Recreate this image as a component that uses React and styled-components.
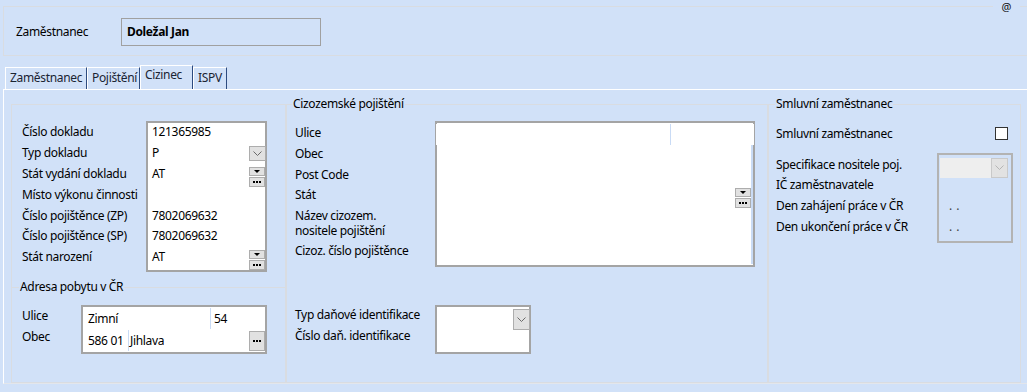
import React from 'react';
import styled, { createGlobalStyle } from 'styled-components';

const C = {
  bg: '#d1e1f8',
  group: '#d9dce1',
  box: '#a4a4a4',
  sep: '#c9dbf5',
  btn: '#e1e1e1',
  btnBorder: '#adadad',
  tabEdge: '#2d4b7f',
};

const GlobalStyle = createGlobalStyle`
  * { box-sizing: border-box; }
  html, body { margin: 0; padding: 0; background: ${C.bg}; }
  body {
    font-family: "Noto Sans", "Open Sans", sans-serif;
    font-size: 12px;
    line-height: 16px;
    letter-spacing: -0.33px;
    color: #000;
  }
`;

const Screen = styled.div`
  width: 1027px;
  height: 392px;
  overflow: hidden;
  background: ${C.bg};
  padding-top: 6px;
  display: flex;
  flex-direction: column;
`;

/* ---------- header ---------- */
const HeaderFrame = styled.div`
  position: relative;
  flex: none;
  margin: 0 -6px 0 3px;
  height: 50px;
  border: 1px solid ${C.group};
  display: flex;
  align-items: center;
  padding: 2px 0 0 12px;
`;

const FrameBadge = styled.span`
  position: absolute;
  top: -8px;
  left: 989px;
  width: 27px;
  text-align: center;
  background: ${C.bg};
  font-size: 11px;
  letter-spacing: 0;
  color: #111;
`;

const HeaderLabel = styled.div`
  width: 105px;
  flex: none;
`;

const HeaderInput = styled.div`
  width: 200px;
  height: 28px;
  border: 1px solid #a0a0a0;
  display: flex;
  align-items: center;
  padding-left: 5px;
  font-weight: 700;
`;

/* ---------- tabs ---------- */
const TabStrip = styled.div`
  flex: none;
  margin-top: 9px;
  height: 24px;
  display: flex;
  align-items: flex-end;
  padding-left: 5px;
`;

const Tab = styled.div`
  width: ${p => p.$w}px;
  height: ${p => (p.$active ? 24 : 22)}px;
  border-left: 1px solid #fff;
  border-top: 1px solid #fff;
  border-right: 1px solid ${C.tabEdge};
  padding: ${p => (p.$active ? '1px' : '1.5px')} 0 0 4px;
  white-space: nowrap;
  overflow: hidden;
  color: #1a2433;
`;

/* ---------- page ---------- */
const Page = styled.div`
  flex: none;
  margin-left: 3px;
  height: 295px;
  border-top: 1px solid #fff;
  border-left: 1px solid #fff;
  border-bottom: 1px solid #e3e6eb;
  padding: 6px 0 0 7px;
  display: grid;
  grid-template-columns: 275px 482px 253px;
  grid-template-rows: 287px;
`;

const PlainGroup = styled.div`
  margin-top: 8px;
  border: 1px solid ${C.group};
  display: flex;
  flex-direction: column;
`;

const Group = styled.fieldset`
  margin: 0;
  padding: 0;
  min-width: 0;
  border: 1px solid ${C.group};
  display: flex;
  flex-direction: column;
`;

const Caption = styled.legend`
  margin-left: ${p => p.$ml}px;
  padding: 0 1px;
  line-height: 16px;
  white-space: nowrap;
`;

const CaptionRule = styled.div`
  height: 16px;
  margin-top: ${p => p.$mt}px;
  display: flex;
  align-items: center;
  gap: 1px;
  &::before {
    content: '';
    width: 7px;
    height: 1px;
    background: ${C.group};
  }
  &::after {
    content: '';
    flex: 1;
    height: 1px;
    background: ${C.group};
  }
`;

const Section = styled.div`
  display: flex;
  align-items: flex-start;
  padding-left: ${p => p.$pl}px;
  margin-top: ${p => p.$mt}px;
`;

const LabelCol = styled.div`
  width: ${p => p.$w}px;
  flex: none;
  display: flex;
  flex-direction: column;
  margin-top: ${p => p.$mt || 0}px;
`;

const Row = styled.div`
  height: ${p => p.$h || 20.8}px;
  flex: none;
  display: flex;
  align-items: center;
  justify-content: space-between;
  white-space: nowrap;
  padding-left: ${p => p.$pl || 0}px;
`;

const TallLabel = styled.div`
  height: 35px;
  padding-top: 2.7px;
  line-height: 15px;
  white-space: nowrap;
`;

const Box = styled.div`
  width: ${p => p.$w}px;
  height: ${p => p.$h}px;
  flex: none;
  border: 1px solid ${p => p.$c || C.box};
  box-shadow: inset 0 0 0 1px ${p => p.$c || C.box};
  background: ${p => (p.$clear ? 'transparent' : '#fff')};
  display: flex;
  flex-direction: column;
  padding: ${p => p.$pad || '0'};
`;

/* ---------- buttons ---------- */
const MiniBtn = styled.div`
  width: ${p => p.$w || 16}px;
  height: ${p => p.$h}px;
  flex: none;
  background: ${p => (p.$off ? '#e2e2e2' : C.btn)};
  border: 1px solid ${p => (p.$off ? '#c9c9c9' : C.btnBorder)};
  display: flex;
  align-items: center;
  justify-content: center;
  margin-right: ${p => p.$mr || 0}px;
  align-self: ${p => p.$self || 'center'};
  margin-top: ${p => p.$mt || 0}px;
`;

const BtnPair = styled.div`
  display: flex;
  flex-direction: column;
  gap: 1px;
  align-self: flex-start;
  margin-top: ${p => p.$mt}px;
  margin-right: ${p => p.$mr || 0}px;
`;

const Chevron = ({ color = '#6a6a6a' }) => (
  <svg width="9" height="5" viewBox="0 0 9 5">
    <polyline points="0.5,0.5 4.5,4.5 8.5,0.5" fill="none" stroke={color} strokeWidth="1" />
  </svg>
);

const Tri = () => (
  <svg width="6" height="3" viewBox="0 0 6 3">
    <polygon points="0,0 6,0 3,3" fill="#000" />
  </svg>
);

const Dots = () => (
  <svg width="8" height="2" viewBox="0 0 8 2">
    <rect x="0" y="0" width="2" height="2" fill="#000" />
    <rect x="3" y="0" width="2" height="2" fill="#000" />
    <rect x="6" y="0" width="2" height="2" fill="#000" />
  </svg>
);

const Pair = ({ mt = 3, mr = 1 }) => (
  <BtnPair $mt={mt} $mr={mr}>
    <MiniBtn $h={9}><Tri /></MiniBtn>
    <MiniBtn $h={10}><Dots /></MiniBtn>
  </BtnPair>
);

/* ---------- address cells ---------- */
const CellRow = styled.div`
  height: ${p => p.$h || 21}px;
  flex: none;
  display: flex;
  margin-top: ${p => p.$mt || 0}px;
`;

const Cell = styled.div`
  width: ${p => (p.$w ? `${p.$w}px` : 'auto')};
  flex: ${p => (p.$w ? 'none' : '1')};
  display: flex;
  align-items: center;
  justify-content: space-between;
  padding-left: ${p => p.$pl ?? 3}px;
  white-space: nowrap;
  background: #fff;
`;

const CellSep = styled.div`
  width: 1px;
  flex: none;
  background: ${C.sep};
`;

const MidRest = styled.div`
  flex: 1;
  display: flex;
  flex-direction: column;
  margin: 0 1px 2px 0;
  border-right: 2px solid ${C.sep};
`;

/* ---------- right group ---------- */
const CheckRow = styled.div`
  height: 20.8px;
  margin-top: 11.6px;
  display: flex;
  align-items: center;
  justify-content: space-between;
  padding: 0 12px 0 7px;
`;

const CheckBox = styled.div`
  width: 13px;
  height: 13px;
  border: 1px solid #333;
  background: #fff;
`;

const DisabledCombo = styled.div`
  width: 68px;
  height: 20px;
  margin-top: 3.5px;
  align-self: flex-start;
  background: #eeeeee;
  display: flex;
  justify-content: flex-end;
`;

const DateDots = styled.span`
  color: #444;
  padding-left: 9px;
  letter-spacing: 0.5px;
`;

const leftRows = [
  { label: 'Číslo dokladu', value: '121365985' },
  { label: 'Typ dokladu', value: 'P', control: 'combo' },
  { label: 'Stát vydání dokladu', value: 'AT', control: 'pair' },
  { label: 'Místo výkonu činnosti', value: '' },
  { label: 'Číslo pojištěnce (ZP)', value: '7802069632' },
  { label: 'Číslo pojištěnce (SP)', value: '7802069632' },
  { label: 'Stát narození', value: 'AT', control: 'pair' },
];

const tabs = [
  { name: 'Zaměstnanec', w: 82 },
  { name: 'Pojištění', w: 53 },
  { name: 'Cizinec', w: 53, active: true },
  { name: 'ISPV', w: 34 },
];

export default function App() {
  return (
    <>
      <GlobalStyle />
      <Screen>
        <HeaderFrame>
          <FrameBadge>@</FrameBadge>
          <HeaderLabel>Zaměstnanec</HeaderLabel>
          <HeaderInput>Doležal Jan</HeaderInput>
        </HeaderFrame>

        <TabStrip>
          {tabs.map(t => (
            <Tab key={t.name} $w={t.w} $active={t.active}>{t.name}</Tab>
          ))}
        </TabStrip>

        <Page>
          {/* left column */}
          <PlainGroup>
            <Section $pl={10} $mt={16}>
              <LabelCol $w={124} $mt={1}>
                {leftRows.map(r => <Row key={r.label}>{r.label}</Row>)}
              </LabelCol>
              <Box $w={121} $h={151} $pad="0 0 0 0">
                {leftRows.map(r => (
                  <Row key={r.label} $pl={5}>
                    <span>{r.value}</span>
                    {r.control === 'combo' && (
                      <MiniBtn $w={17} $h={15}><Chevron /></MiniBtn>
                    )}
                    {r.control === 'pair' && <Pair mt={3} mr={1} />}
                  </Row>
                ))}
              </Box>
            </Section>

            <CaptionRule $mt={7}>Adresa pobytu v ČR</CaptionRule>

            <Section $pl={10} $mt={10}>
              <LabelCol $w={59}>
                <Row $h={21}>Ulice</Row>
                <Row $h={21}>Obec</Row>
              </LabelCol>
              <Box $w={186} $h={49} $pad="2px 2px 0 3px">
                <CellRow>
                  <Cell $w={125}>Zimní</Cell>
                  <CellSep />
                  <Cell>54</Cell>
                </CellRow>
                <CellRow $mt={1}>
                  <Cell $w={43}>586 01</Cell>
                  <CellSep />
                  <Cell $pl={1}>
                    <span>Jihlava</span>
                    <MiniBtn $w={16} $h={20} $mr={-1}><Dots /></MiniBtn>
                  </Cell>
                </CellRow>
              </Box>
            </Section>
          </PlainGroup>

          {/* middle column */}
          <Group>
            <Caption $ml={5}>Cizozemské pojištění</Caption>
            <Section $pl={8} $mt={9}>
              <LabelCol $w={140} $mt={1.6}>
                <Row>Ulice</Row>
                <Row>Obec</Row>
                <Row>Post Code</Row>
                <Row>Stát</Row>
                <TallLabel>Název cizozem.<br />nositele pojištění</TallLabel>
                <Row>Cizoz. číslo pojištěnce</Row>
              </LabelCol>
              <Box $w={320} $h={146}>
                <CellRow $mt={2}>
                  <Cell $w={234} />
                  <CellSep />
                  <Cell />
                </CellRow>
                <MidRest>
                  <Row />
                  <Row />
                  <Row>
                    <span />
                    <Pair mt={1} mr={0} />
                  </Row>
                </MidRest>
              </Box>
            </Section>

            <Section $pl={8} $mt={38}>
              <LabelCol $w={140}>
                <Row>Typ daňové identifikace</Row>
                <Row>Číslo daň. identifikace</Row>
              </LabelCol>
              <Box $w={96} $h={49} $pad="2px 0 0 0">
                <MiniBtn $w={17} $h={21} $self="flex-end" $mt={1}><Chevron /></MiniBtn>
              </Box>
            </Section>
          </Group>

          {/* right column */}
          <Group>
            <Caption $ml={6}>Smluvní zaměstnanec</Caption>
            <CheckRow>
              <span>Smluvní zaměstnanec</span>
              <CheckBox />
            </CheckRow>
            <Section $pl={7} $mt={8.6}>
              <LabelCol $w={161} $mt={1.5}>
                <Row $h={20.6}>Specifikace nositele poj.</Row>
                <Row $h={20.6}>IČ zaměstnavatele</Row>
                <Row $h={20.6}>Den zahájení práce v ČR</Row>
                <Row $h={20.6}>Den ukončení práce v ČR</Row>
              </LabelCol>
              <Box $w={76} $h={90} $c="#b3b3b3" $clear $pad="0.5px 0 0 2px">
                <Row $h={20.6}>
                  <DisabledCombo>
                    <MiniBtn $w={17} $h={20} $off>
                      <Chevron color="#b5b5b5" />
                    </MiniBtn>
                  </DisabledCombo>
                </Row>
                <Row $h={20.6} />
                <Row $h={20.6}><DateDots>. .</DateDots></Row>
                <Row $h={20.6}><DateDots>. .</DateDots></Row>
              </Box>
            </Section>
          </Group>
        </Page>
      </Screen>
    </>
  );
}
